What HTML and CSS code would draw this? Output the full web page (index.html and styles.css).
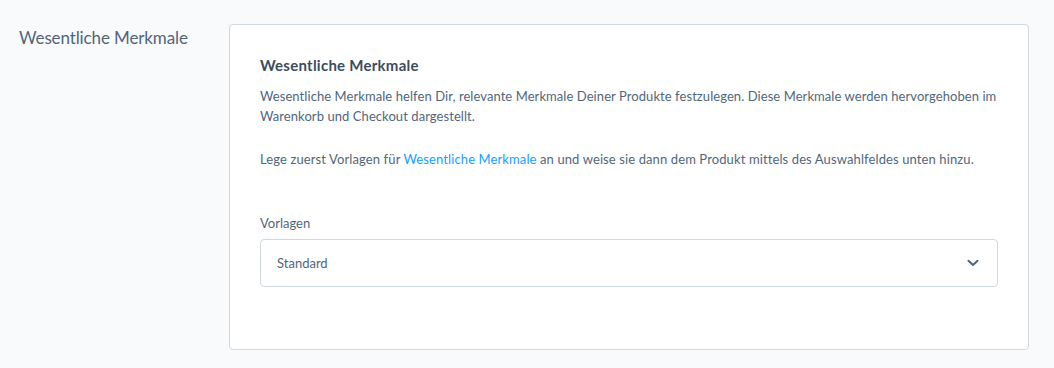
FILE: index.html
```html
<!DOCTYPE html>
<html lang="de">
<head>
<meta charset="utf-8">
<link rel="stylesheet" href="styles.css">
</head>
<body>
<div class="page">
  <div class="side-label">Wesentliche Merkmale</div>
  <div class="card">
    <h3 class="card-title">Wesentliche Merkmale</h3>
    <p class="text">Wesentliche Merkmale helfen Dir, relevante Merkmale Deiner Produkte festzulegen. Diese Merkmale werden hervorgehoben im Warenkorb und Checkout dargestellt.</p>
    <p class="text text-second">Lege zuerst Vorlagen für <a class="link" href="#">Wesentliche Merkmale</a> an und weise sie dann dem Produkt mittels des Auswahlfeldes unten hinzu.</p>
    <div class="field">
      <label class="field-label">Vorlagen</label>
      <div class="select">
        <span class="select-value">Standard</span>
        <svg class="chevron" width="12" height="8" viewBox="0 0 12 8"><path d="M1.5 1.8 L6 6 L10.5 1.8" fill="none" stroke="#52667a" stroke-width="2" stroke-linecap="round" stroke-linejoin="round"/></svg>
      </div>
    </div>
  </div>
</div>
</body>
</html>
```
FILE: styles.css
```css
html, body {
  margin: 0;
  padding: 0;
  background: #f9fafb;
}
body {
  font-family: Lato, "Open Sans", sans-serif;
  color: #52667a;
}
.page {
  display: grid;
  grid-template-columns: 229px 1fr;
  padding: 24px 25px 0 0;
}
.side-label {
  padding-left: 19px;
  padding-top: 2px;
  font-size: 17px;
  line-height: 24px;
  letter-spacing: -0.12px;
  color: #52667a;
}
.card {
  background: #fff;
  border: 1px solid #d1d9e0;
  border-radius: 4px;
  padding: 30px 30px 62px 30px;
}
.card-title {
  margin: 0;
  font-size: 15px;
  font-weight: 700;
  line-height: 20px;
  letter-spacing: 0.25px;
  color: #3d4c5c;
}
.text {
  margin: 12px 0 0 0;
  font-size: 13px;
  line-height: 19.6px;
  letter-spacing: 0.07px;
}
.text-second {
  margin-top: 24px;
  letter-spacing: 0.11px;
}
.link {
  color: #189eff;
  text-decoration: none;
}
.field {
  margin-top: 44px;
}
.field-label {
  display: block;
  font-size: 13px;
  line-height: 18px;
  margin-bottom: 7px;
}
.select {
  height: 48px;
  box-sizing: border-box;
  border: 1px solid #d1d9e0;
  border-radius: 4px;
  display: flex;
  align-items: center;
  justify-content: space-between;
  padding: 0 18px 0 16px;
  font-size: 13px;
}
.chevron {
  display: block;
}
```
